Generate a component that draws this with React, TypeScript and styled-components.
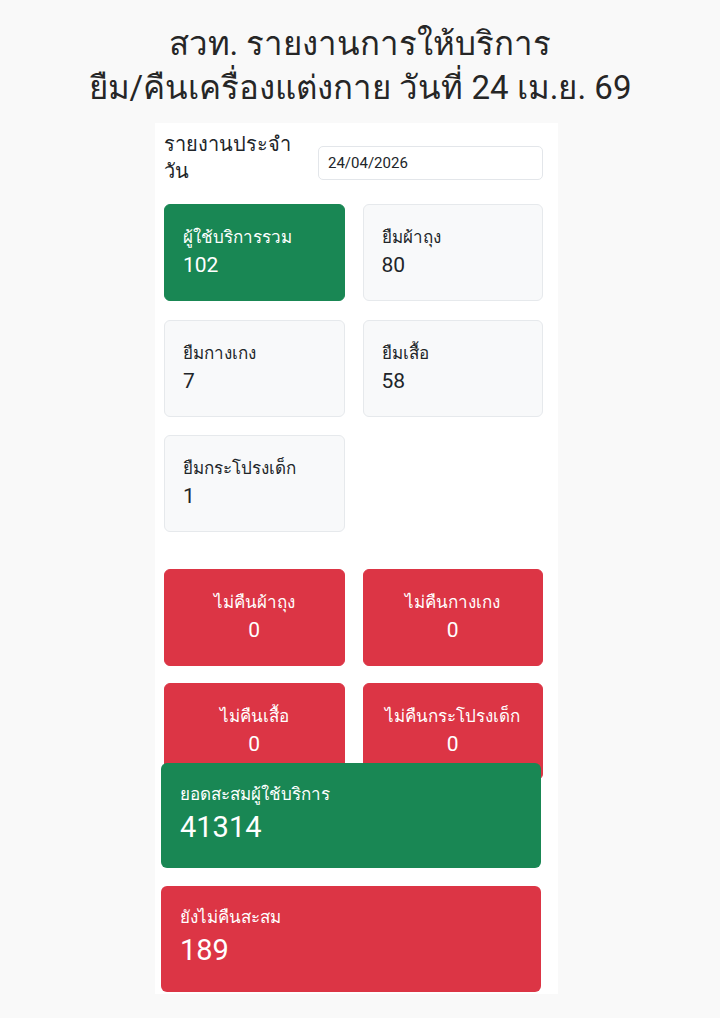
import React from "react";
import styled, { createGlobalStyle } from "styled-components";

const Global = createGlobalStyle`
  html, body { margin: 0; padding: 0; background: #f9f9f9; }
  body {
    font-family: Roboto, sans-serif;
    color: #212529;
  }
  * { box-sizing: border-box; }
`;

const Page = styled.div`
  width: 720px;
  min-height: 1018px;
  display: flex;
  flex-direction: column;
  align-items: center;
  padding-top: 22px;
`;

const Title = styled.h1`
  margin: 0 0 13px 0;
  font-size: 33px;
  line-height: 44px;
  font-weight: 400;
  text-align: center;
  color: #262626;
`;

const Panel = styled.div`
  width: 403px;
  margin-right: 7px;
  background: #ffffff;
  padding: 8px 0 2px 0;
`;

const TopSection = styled.div`
  padding: 0 15px 0 9px;
`;

const Header = styled.div`
  display: grid;
  grid-template-columns: 136px 1fr;
  column-gap: 18px;
  align-items: start;
  margin-bottom: 19px;
`;

const HeaderLabel = styled.div`
  font-size: 20px;
  line-height: 27px;
`;

const DateInput = styled.div`
  margin-top: 15px;
  height: 34px;
  border: 1px solid #e3e6ea;
  border-radius: 5px;
  padding: 0 9px;
  display: flex;
  align-items: center;
  font-size: 15px;
  color: #212529;
`;

const Grid = styled.div<{ $mb?: number; $rowGap: number }>`
  display: grid;
  grid-template-columns: 1fr 1fr;
  column-gap: 18px;
  row-gap: ${(p) => p.$rowGap}px;
  margin-bottom: ${(p) => p.$mb ?? 0}px;
`;

const Card = styled.div<{ $tone: "green" | "light" | "red"; $center?: boolean }>`
  height: 97px;
  border-radius: 6px;
  padding: 20px 18px;
  text-align: ${(p) => (p.$center ? "center" : "left")};
  background: ${(p) =>
    p.$tone === "green" ? "#198754" : p.$tone === "red" ? "#dc3545" : "#f8f9fa"};
  border: 1px solid
    ${(p) =>
      p.$tone === "green" ? "#198754" : p.$tone === "red" ? "#dc3545" : "#e6e9ec"};
  color: ${(p) => (p.$tone === "light" ? "#212529" : "#ffffff")};
`;

const CardLabel = styled.div`
  font-size: 17px;
  line-height: 25px;
`;

const CardValue = styled.div`
  font-size: 21px;
  line-height: 30px;
`;

const BottomSection = styled.div`
  margin-top: -17px;
  padding: 0 17px 0 6px;
  display: flex;
  flex-direction: column;
  gap: 18px;
`;

const BigCard = styled.div<{ $tone: "green" | "red"; $h: number }>`
  height: ${(p) => p.$h}px;
  border-radius: 6px;
  padding: 19px 19px;
  background: ${(p) => (p.$tone === "green" ? "#198754" : "#dc3545")};
  color: #ffffff;
`;

const BigLabel = styled.div`
  font-size: 17px;
  line-height: 25px;
`;

const BigValue = styled.div`
  font-size: 29px;
  line-height: 40px;
`;

const topStats: { label: string; value: number; tone: "green" | "light" }[] = [
  { label: "ผู้ใช้บริการรวม", value: 102, tone: "green" },
  { label: "ยืมผ้าถุง", value: 80, tone: "light" },
  { label: "ยืมกางเกง", value: 7, tone: "light" },
  { label: "ยืมเสื้อ", value: 58, tone: "light" },
  { label: "ยืมกระโปรงเด็ก", value: 1, tone: "light" },
];

const notReturned = [
  { label: "ไม่คืนผ้าถุง", value: 0 },
  { label: "ไม่คืนกางเกง", value: 0 },
  { label: "ไม่คืนเสื้อ", value: 0 },
  { label: "ไม่คืนกระโปรงเด็ก", value: 0 },
];

export default function App() {
  return (
    <>
      <Global />
      <Page>
        <Title>
          สวท. รายงานการให้บริการ
          <br />
          ยืม/คืนเครื่องแต่งกาย วันที่ 24 เม.ย. 69
        </Title>
        <Panel>
          <TopSection>
            <Header>
              <HeaderLabel>รายงานประจำวัน</HeaderLabel>
              <DateInput>24/04/2026</DateInput>
            </Header>
            <Grid $mb={37} $rowGap={18.5}>
              {topStats.map((s) => (
                <Card key={s.label} $tone={s.tone}>
                  <CardLabel>{s.label}</CardLabel>
                  <CardValue>{s.value}</CardValue>
                </Card>
              ))}
            </Grid>
            <Grid $rowGap={17}>
              {notReturned.map((s) => (
                <Card key={s.label} $tone="red" $center>
                  <CardLabel>{s.label}</CardLabel>
                  <CardValue>{s.value}</CardValue>
                </Card>
              ))}
            </Grid>
          </TopSection>
          <BottomSection>
            <BigCard $tone="green" $h={105}>
              <BigLabel>ยอดสะสมผู้ใช้บริการ</BigLabel>
              <BigValue>41314</BigValue>
            </BigCard>
            <BigCard $tone="red" $h={106}>
              <BigLabel>ยังไม่คืนสะสม</BigLabel>
              <BigValue>189</BigValue>
            </BigCard>
          </BottomSection>
        </Panel>
      </Page>
    </>
  );
}
